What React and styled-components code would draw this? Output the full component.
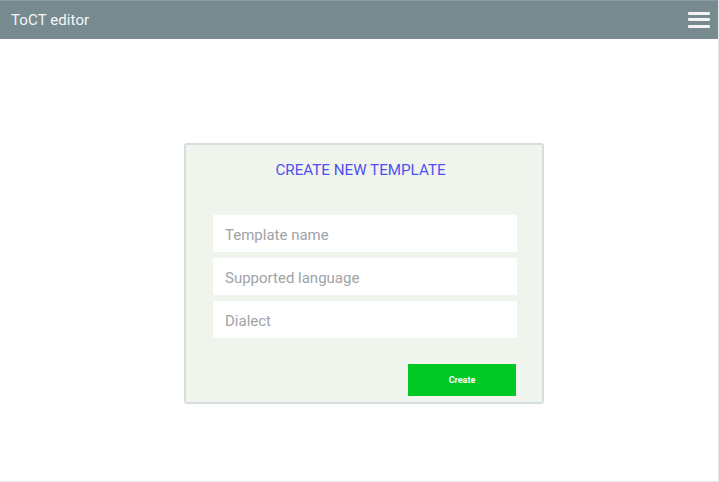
import React from "react";
import styled, { createGlobalStyle } from "styled-components";

const Global = createGlobalStyle`
  html, body { margin: 0; padding: 0; background: #ffffff; }
  body { font-family: Roboto, "Liberation Sans", sans-serif; }
  * { box-sizing: border-box; }
`;

const Frame = styled.div`
  width: 719px;
  height: 482px;
  border-right: 1px solid #e8eaea;
  border-bottom: 1px solid #e8eaea;
  display: flex;
  flex-direction: column;
`;

const Header = styled.header`
  height: 39px;
  flex: none;
  background: #778a90;
  border-top: 1px solid #8a9ba0;
  display: flex;
  align-items: center;
  justify-content: space-between;
  padding: 0 8px 0 11px;
`;

const Title = styled.div`
  color: #f4f6f6;
  font-size: 15px;
  letter-spacing: 0.1px;
`;

const Burger = styled.button`
  width: 22px;
  height: 16px;
  border: 0;
  padding: 0;
  background: transparent;
  display: flex;
  flex-direction: column;
  justify-content: space-between;
  margin-top: -1px;
  span {
    display: block;
    height: 3px;
    border-radius: 1px;
    background: #f2f4f4;
  }
`;

const Main = styled.main`
  flex: 1;
  padding: 104px 0 0 184px;
`;

const Card = styled.section`
  width: 360px;
  height: 261px;
  background: #eff5ec;
  border: 2px solid #d8dedd;
  border-radius: 3px;
  padding: 15px 26px 0 27px;
  display: flex;
  flex-direction: column;
`;

const Heading = styled.h2`
  margin: 0;
  text-align: center;
  font-weight: 400;
  font-size: 15.2px;
  color: #5050ee;
  line-height: 20px;
  padding-right: 8px;
`;

const Fields = styled.div`
  margin-top: 35px;
  display: flex;
  flex-direction: column;
  gap: 6px;
`;

const Input = styled.input`
  width: 304px;
  height: 37px;
  border: 0;
  outline: none;
  background: #ffffff;
  padding: 2px 12px 0;
  font-family: Roboto, "Liberation Sans", sans-serif;
  font-size: 15px;
  color: #333;
  &::placeholder { color: #9ea3a8; }
`;

const Actions = styled.div`
  margin-top: 26px;
  display: flex;
  justify-content: flex-end;
`;

const Button = styled.button`
  width: 108px;
  height: 32px;
  border: 0;
  background: #00c825;
  color: #ffffff;
  font-family: Roboto, "Liberation Sans", sans-serif;
  font-weight: 700;
  font-size: 9px;
  padding: 0;
`;

export default function App() {
  return (
    <>
      <Global />
      <Frame>
        <Header>
          <Title>ToCT editor</Title>
          <Burger aria-label="menu">
            <span />
            <span />
            <span />
          </Burger>
        </Header>
        <Main>
          <Card>
            <Heading>CREATE NEW TEMPLATE</Heading>
            <Fields>
              <Input placeholder="Template name" />
              <Input placeholder="Supported language" />
              <Input placeholder="Dialect" />
            </Fields>
            <Actions>
              <Button>Create</Button>
            </Actions>
          </Card>
        </Main>
      </Frame>
    </>
  );
}
